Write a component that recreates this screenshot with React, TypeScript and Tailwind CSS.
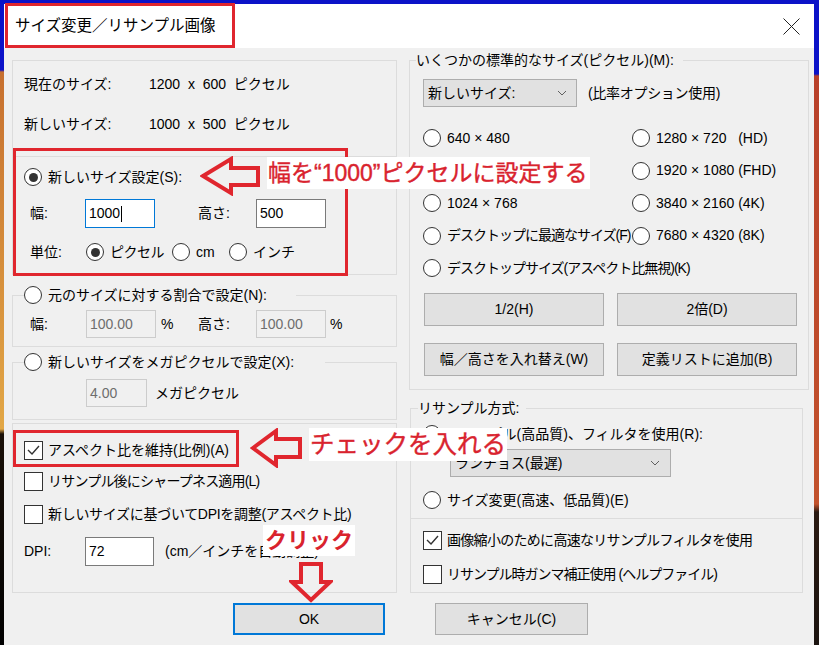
import React from 'react';

// 小さな Windows 風コントロール
const Radio = ({ checked = false }: { checked?: boolean }) => (
  <span className="flex h-[18px] w-[18px] shrink-0 items-center justify-center rounded-full border border-[#333] bg-white">
    {checked && <span className="h-[9px] w-[9px] rounded-full bg-[#333]" />}
  </span>
);

const Check = ({ checked = false }: { checked?: boolean }) => (
  <span className="flex h-[19px] w-[19px] shrink-0 items-center justify-center border border-[#333] bg-white">
    {checked && (
      <svg width="13" height="10" viewBox="0 0 13 10">
        <polyline points="1,5 5,9 12,1" fill="none" stroke="#333" strokeWidth="1.4" />
      </svg>
    )}
  </span>
);

const RadioRow = ({ checked = false, children }: { checked?: boolean; children: React.ReactNode }) => (
  <div className="flex h-[20px] items-center gap-[6px] whitespace-pre">
    <Radio checked={checked} />
    <span>{children}</span>
  </div>
);

const CheckRow = ({ checked = false, children }: { checked?: boolean; children: React.ReactNode }) => (
  <div className="flex h-[20px] items-center gap-[5px] whitespace-nowrap">
    <Check checked={checked} />
    <span>{children}</span>
  </div>
);

const Chevron = () => (
  <svg width="10" height="6" viewBox="0 0 10 6">
    <polyline points="1,1 5,5 9,1" fill="none" stroke="#606060" strokeWidth="1" />
  </svg>
);

const Button = ({ children, className = '' }: { children: React.ReactNode; className?: string }) => (
  <div className={`flex h-[33px] items-center justify-center border border-[#adadad] bg-[#e1e1e1] ${className}`}>
    {children}
  </div>
);

const App = () => {
  return (
    <div
      lang="ja"
      className="relative flex h-[645px] w-[819px] flex-col overflow-hidden bg-black text-[14px] text-black [font-family:'Liberation_Sans','Noto_Sans_CJK_JP',sans-serif]"
    >
      <div className="h-[4px] shrink-0 bg-[#0b12c8]" />
      <div className="flex flex-1">
        <div className="w-[4px] bg-[linear-gradient(to_bottom,#0b12c8_0px,#0b12c8_66px,#c7702f_68px,#e2a746_425px,#1a1008_430px,#000_641px)]" />

        {/* ダイアログ */}
        <div className="flex w-[810px] flex-col bg-[#f0f0f0]">
          {/* タイトルバー */}
          <div className="flex h-[44px] shrink-0 items-center justify-between bg-white pl-[11px] pr-[14px]">
            <span className="text-[15.5px]">サイズ変更／リサンプル画像</span>
            <svg width="17" height="17" viewBox="0 0 17 17">
              <line x1="0.5" y1="0.5" x2="16.5" y2="16.5" stroke="#222" strokeWidth="1" />
              <line x1="16.5" y1="0.5" x2="0.5" y2="16.5" stroke="#222" strokeWidth="1" />
            </svg>
          </div>

          <div className="flex flex-1 flex-col pl-[8px] pt-[2px]">
            <div className="flex gap-[12px]">
              {/* 左カラム */}
              <div className="flex w-[385px] flex-col pt-[10px]">
                <div className="h-[97px] border border-[#dcdcdc] pl-[11px] pt-[13px]">
                  <div className="grid h-[20px] grid-cols-[125px_1fr] items-center">
                    <span>現在のサイズ:</span>
                    <span className="whitespace-pre">1200  x  600  ピクセル</span>
                  </div>
                  <div className="mt-[20px] grid h-[20px] grid-cols-[125px_1fr] items-center">
                    <span>新しいサイズ:</span>
                    <span className="whitespace-pre">1000  x  500  ピクセル</span>
                  </div>
                </div>

                <div className="h-[118px] border border-t-0 border-[#dcdcdc] pt-[10px]">
                  <div className="pl-[11px]">
                    <RadioRow checked>新しいサイズ設定(S):</RadioRow>
                  </div>
                  <div className="mt-[12px] flex h-[29px] items-center pl-[17px]">
                    <span className="w-[55px]">幅:</span>
                    <div className="flex h-[29px] w-[70px] items-center border border-[#0078d7] bg-white pl-[3px]">
                      1000
                      <span className="ml-px h-[16px] w-px bg-black" />
                    </div>
                    <span className="ml-[43px] w-[58px]">高さ:</span>
                    <div className="flex h-[29px] w-[70px] items-center border border-[#7a7a7a] bg-white pl-[3px]">500</div>
                  </div>
                  <div className="mt-[14px] flex h-[20px] items-center pl-[17px]">
                    <span className="w-[56px]">単位:</span>
                    <div className="w-[86px] tracking-[-0.5px]">
                      <RadioRow checked>ピクセル</RadioRow>
                    </div>
                    <div className="w-[57px]">
                      <RadioRow>cm</RadioRow>
                    </div>
                    <RadioRow>インチ</RadioRow>
                  </div>
                </div>

                <fieldset className="mt-[10px] border border-[#dcdcdc] pb-[8px]">
                  <legend className="ml-[11px] pr-[29px]">
                    <RadioRow>元のサイズに対する割合で設定(N):</RadioRow>
                  </legend>
                  <div className="mt-[5px] flex h-[28px] items-center pl-[17px]">
                    <span className="w-[56px]">幅:</span>
                    <div className="flex h-[28px] w-[70px] items-center border border-[#cccccc] pl-[3px] text-[#6d6d6d]">100.00</div>
                    <span className="ml-[5px] w-[37px]">%</span>
                    <span className="w-[58px]">高さ:</span>
                    <div className="flex h-[28px] w-[70px] items-center border border-[#cccccc] pl-[3px] text-[#6d6d6d]">100.00</div>
                    <span className="ml-[4px]">%</span>
                  </div>
                </fieldset>

                <fieldset className="mt-[5px] border border-[#dcdcdc] pb-[12px]">
                  <legend className="ml-[11px] pr-[31px]">
                    <RadioRow>新しいサイズをメガピクセルで設定(X):</RadioRow>
                  </legend>
                  <div className="mt-[7px] flex h-[28px] items-center pl-[73px]">
                    <div className="flex h-[28px] w-[61px] items-center border border-[#cccccc] pl-[3px] text-[#6d6d6d]">4.00</div>
                    <span className="ml-[8px]">メガピクセル</span>
                  </div>
                </fieldset>

                <div className="mt-[3px] h-[170px] border border-[#dcdcdc] pl-[11px] pt-[16px]">
                  <CheckRow checked>アスペクト比を維持(比例)(A)</CheckRow>
                  <div className="mt-[11px] tracking-[-0.8px]">
                    <CheckRow>リサンプル後にシャープネス適用(L)</CheckRow>
                  </div>
                  <div className="mt-[13px] tracking-[-0.3px]">
                    <CheckRow>新しいサイズに基づいてDPIを調整(アスペクト比)</CheckRow>
                  </div>
                  <div className="mt-[13px] flex h-[29px] items-center">
                    <span className="w-[61px]">DPI:</span>
                    <div className="flex h-[29px] w-[69px] items-center border border-[#7a7a7a] bg-white pl-[3px]">72</div>
                    <span className="ml-[11px] whitespace-nowrap">(cm／インチを自動調整)</span>
                  </div>
                </div>
              </div>

              {/* 右カラム */}
              <div className="flex w-[400px] flex-col">
                <fieldset className="border border-[#dcdcdc] pb-[13px]">
                  <legend className="ml-[6px] h-[20px] pr-[9px] leading-[20px]">いくつかの標準的なサイズ(ピクセル)(M):</legend>
                  <div className="mt-[9px] flex items-center pl-[13px]">
                    <div className="flex h-[28px] w-[154px] items-center justify-between border border-[#adadad] bg-[#e1e1e1] pl-[4px] pr-[9px]">
                      <span>新しいサイズ:</span>
                      <Chevron />
                    </div>
                    <span className="ml-[11px] tracking-[-0.3px]">(比率オプション使用)</span>
                  </div>
                  <div className="mt-[21px] grid grid-cols-[209px_1fr] gap-y-[12.5px] pl-[13px]">
                    <RadioRow>640 × 480</RadioRow>
                    <RadioRow>1280 × 720   (HD)</RadioRow>
                    <RadioRow>800 × 600</RadioRow>
                    <RadioRow>1920 × 1080 (FHD)</RadioRow>
                    <RadioRow>1024 × 768</RadioRow>
                    <RadioRow>3840 × 2160 (4K)</RadioRow>
                    <div className="tracking-[-1px]">
                      <RadioRow>デスクトップに最適なサイズ(F)</RadioRow>
                    </div>
                    <RadioRow>7680 × 4320 (8K)</RadioRow>
                    <div className="tracking-[-1px]">
                      <RadioRow>デスクトップサイズ(アスペクト比無視)(K)</RadioRow>
                    </div>
                  </div>
                  <div className="mt-[15px] grid grid-cols-[180px_180px] gap-x-[13px] gap-y-[17px] pl-[14px]">
                    <Button>1/2(H)</Button>
                    <Button>2倍(D)</Button>
                    <Button>幅／高さを入れ替え(W)</Button>
                    <Button>定義リストに追加(B)</Button>
                  </div>
                </fieldset>

                <fieldset className="ml-[1px] mt-[8px] w-[393px] border border-[#dcdcdc] pb-[8px]">
                  <legend className="ml-[7px] h-[20px] pr-[7px] leading-[20px]">リサンプル方式:</legend>
                  <div className="mt-[6px] pl-[12px]">
                    <RadioRow checked>再サンプル(高品質)、フィルタを使用(R):</RadioRow>
                  </div>
                  <div className="ml-[39px] mt-[5px] flex h-[28px] w-[221px] items-center justify-between border border-[#adadad] bg-[#e1e1e1] pl-[4px] pr-[10px]">
                    <span>ランチョス(最遅)</span>
                    <Chevron />
                  </div>
                  <div className="mt-[13px] pl-[12px]">
                    <RadioRow>サイズ変更(高速、低品質)(E)</RadioRow>
                  </div>
                  <div className="mt-[8px] h-px bg-[#dcdcdc]" />
                  <div className="mt-[11px] pl-[12px] tracking-[-0.7px]">
                    <CheckRow checked>画像縮小のために高速なリサンプルフィルタを使用</CheckRow>
                  </div>
                  <div className="mt-[14px] pl-[12px] tracking-[-1px]">
                    <CheckRow>リサンプル時ガンマ補正使用 (ヘルプファイル)</CheckRow>
                  </div>
                </fieldset>
              </div>
            </div>

            {/* OK / キャンセル */}
            <div className="mt-[10px] flex">
              <div className="ml-[221px] flex h-[32px] w-[152px] items-center justify-center border-2 border-[#0078d7] bg-[#e1e1e1]">OK</div>
              <div className="ml-[50px] flex h-[32px] w-[153px] items-center justify-center border border-[#adadad] bg-[#e1e1e1]">キャンセル(C)</div>
            </div>
          </div>
        </div>

        <div className="flex-1 bg-[linear-gradient(to_bottom,#0b12c8_0px,#0b12c8_70px,#b8402a_72px,#c2522c_500px,#2a1a12_508px,#1c1410_641px)]" />
      </div>

      {/* 注釈（赤枠・矢印・テキスト） */}
      <div className="absolute left-[5px] top-[3px] h-[45px] w-[230px] border-[3px] border-[#e0262e]" />
      <div className="absolute left-[13px] top-[148px] h-[128px] w-[335px] border-[3px] border-[#e0262e]" />
      <div className="absolute left-[13px] top-[430px] h-[37px] w-[226px] border-[3px] border-[#e0262e]" />

      <svg className="absolute left-[200px] top-[156px]" width="62" height="40" viewBox="0 0 62 40">
        <polygon points="3,20 31,3 31,12 58,12 58,29 31,29 31,37" fill="none" stroke="#e0262e" strokeWidth="4" />
      </svg>
      <div className="absolute left-[267px] top-[157px] h-[32px] whitespace-nowrap bg-white pl-[1px] pr-[3px] text-[23px] leading-[32px] text-[#d9232e] [-webkit-text-stroke:0.4px_#d9232e]">
        幅を“1000”ピクセルに設定する
      </div>

      <svg className="absolute left-[250px] top-[428px]" width="54" height="40" viewBox="0 0 54 40">
        <polygon points="3,20 26,3 26,11 50,11 50,29 26,29 26,37" fill="none" stroke="#e0262e" strokeWidth="4" />
      </svg>
      <div className="absolute left-[309px] top-[428px] h-[33px] whitespace-nowrap bg-white pl-[1px] pr-[1px] text-[24.5px] leading-[33px] text-[#d9232e] [-webkit-text-stroke:0.4px_#d9232e]">
        チェックを入れる
      </div>

      <div className="absolute left-[263px] top-[525px] h-[31px] whitespace-nowrap bg-white pl-[2px] pr-[2px] text-[22px] font-bold leading-[31px] text-[#d9232e]">
        クリック
      </div>
      <svg className="absolute left-[289px] top-[561px]" width="44" height="42" viewBox="0 0 44 42">
        <polygon points="12,3 32,3 32,21 41,21 22,39 3,21 12,21" fill="none" stroke="#e0262e" strokeWidth="4" />
      </svg>
    </div>
  );
};

export default App;
